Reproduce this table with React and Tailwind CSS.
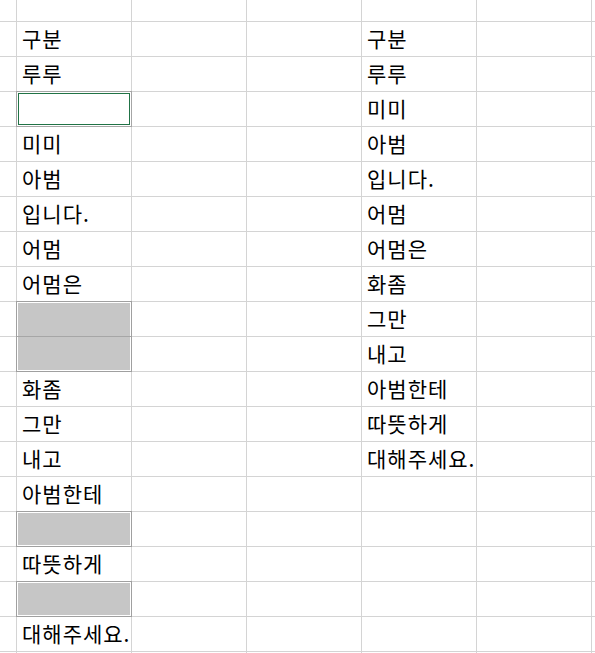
import React from 'react'

const colB = [
  '구분', '루루', '#sel', '미미', '아범', '입니다.', '어멈', '어멈은', '#grey2', '#skip',
  '화좀', '그만', '내고', '아범한테', '#grey', '따뜻하게', '#grey', '대해주세요.', '',
]

const colE = [
  '구분', '루루', '미미', '아범', '입니다.', '어멈', '어멈은', '화좀', '그만', '내고',
  '아범한테', '따뜻하게', '대해주세요.', '', '', '', '', '', '',
]

function Mark({ kind }) {
  if (kind === '#sel') {
    return (
      <div className='absolute left-[-1px] top-[-1px] w-[116px] h-[36px] border border-[#a6a6a6] z-10'>
        <div className='absolute inset-[1px] border border-[#217346]' />
      </div>
    )
  }
  if (kind === '#grey') {
    return (
      <div className='absolute left-[-1px] top-[-1px] w-[116px] h-[36px] border border-[#a0a0a0] bg-white z-10'>
        <div className='absolute inset-[1px] bg-[#c6c6c6]' />
      </div>
    )
  }
  if (kind === '#grey2') {
    return (
      <div className='absolute left-[-1px] top-[-1px] w-[116px] h-[71px] border border-[#a0a0a0] bg-white z-10'>
        <div className='absolute inset-[1px] bg-[#c6c6c6]' />
        <div className='absolute left-0 right-0 top-[34px] h-px bg-[#a6a6a6]' />
      </div>
    )
  }
  return null
}

function Cell({ value }) {
  const isMark = value && value.startsWith('#')
  return (
    <div className='relative w-[115px] h-full shrink-0 border-r border-[#d4d4d4] flex items-center pl-[5px] pb-[1px]'>
      {isMark ? <Mark kind={value} /> : <span className='text-[21px] leading-none tracking-[1px] text-black whitespace-nowrap'>{value}</span>}
    </div>
  )
}

export default function App() {
  return (
    <div
      className='w-[595px] h-[653px] overflow-hidden bg-white'
      style={{ fontFamily: '"Noto Sans CJK KR", "Noto Sans", sans-serif' }}
    >
      <div className='flex h-[22px] border-b border-[#d4d4d4]'>
        <div className='w-[17px] shrink-0 border-r border-[#d4d4d4]' />
        {[0, 1, 2, 3, 4].map((i) => (
          <div key={i} className='w-[115px] shrink-0 border-r border-[#d4d4d4]' />
        ))}
      </div>
      {colB.map((b, r) => (
        <div key={r} className='flex h-[35px] border-b border-[#d4d4d4]'>
          <div className='w-[17px] shrink-0 border-r border-[#d4d4d4]' />
          <Cell value={b} />
          <Cell value='' />
          <Cell value='' />
          <Cell value={colE[r]} />
          <Cell value='' />
        </div>
      ))}
    </div>
  )
}
